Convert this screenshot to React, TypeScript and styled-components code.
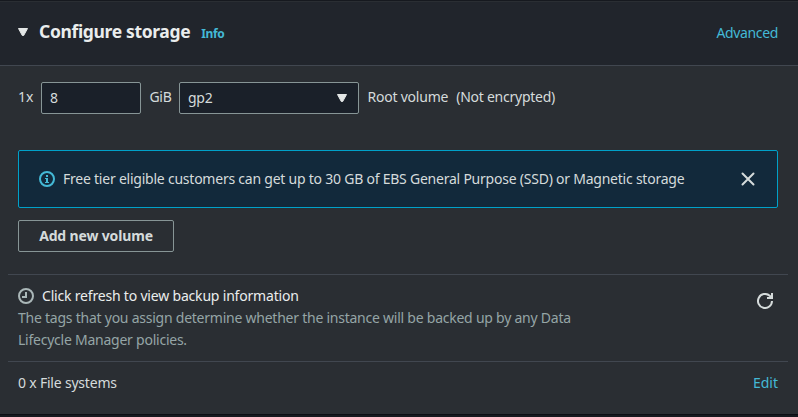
import React from "react";
import styled, { createGlobalStyle } from "styled-components";

const GlobalStyle = createGlobalStyle`
  * { box-sizing: border-box; }
  body {
    margin: 0;
    background: #16191f;
    overflow: hidden;
    font-family: "Noto Sans", "Open Sans", sans-serif;
    font-size: 14px;
    line-height: 22px;
    color: #d5dbdb;
  }
`;

const Panel = styled.section`
  display: flex;
  flex-direction: column;
  height: 415px;
  border-top: 1px solid #16191f;
  border-bottom: 1px solid #0c0e13;
  background: #2a2e33;
`;

const Header = styled.header`
  display: flex;
  align-items: center;
  flex: none;
  height: 65px;
  padding: 0 20px 2px 18px;
  border-top: 1px solid #2a2e33;
  border-bottom: 1px solid #414750;
  background: #21252c;

  & > svg {
    margin-bottom: 2px;
  }
`;

const Title = styled.h2`
  margin: 0 11px 3px 11px;
  font-size: 17.5px;
  font-weight: 700;
  line-height: 22px;
  letter-spacing: -0.35px;
  color: #eaeded;
  white-space: nowrap;
`;

const Label = styled.span<{ $spacing?: number }>`
  letter-spacing: ${({ $spacing = -0.23 }) => $spacing}px;
  white-space: pre;
`;

const Link = styled.a<{ $small?: boolean; $spacing?: number }>`
  margin-top: ${({ $small }) => ($small ? 2 : 0)}px;
  color: #44b9d6;
  font-size: ${({ $small }) => ($small ? 12 : 14)}px;
  font-weight: ${({ $small }) => ($small ? 700 : 400)};
  letter-spacing: ${({ $spacing = 0 }) => $spacing}px;
  cursor: pointer;
`;

const Spacer = styled.div`
  flex: 1;
`;

const VolumeRow = styled.div`
  display: flex;
  align-items: center;
  gap: 8px;
  height: 32px;
  margin: 16px 18px 36px;

  & > span {
    padding-bottom: 2px;
  }
`;

const Field = styled.div<{ $width: number }>`
  display: flex;
  align-items: center;
  justify-content: space-between;
  width: ${({ $width }) => $width}px;
  height: 32px;
  padding: 0 11px 0 7.5px;
  border: 1px solid #879596;
  border-radius: 2px;
  background: #1a2029;
`;

const Alert = styled.div`
  display: flex;
  align-items: center;
  flex: none;
  height: 58px;
  margin: 0 20px 12px 18px;
  padding: 0 22px 0 20px;
  border: 1px solid #00a1c9;
  border-radius: 2px;
  background: #12293b;
`;

const AlertText = styled(Label)`
  flex: 1;
  margin-left: 8px;
`;

const Button = styled.button`
  width: 156px;
  height: 32px;
  margin: 0 0 22px 18px;
  padding: 0;
  border: 1px solid #879596;
  border-radius: 2px;
  background: transparent;
  color: #d5dbdb;
  font: 700 14px/22px "Noto Sans", sans-serif;
  letter-spacing: -0.15px;
`;

const Section = styled.div<{ $height: number }>`
  display: flex;
  flex: none;
  height: ${({ $height }) => $height}px;
  margin: 0 10px 0 8px;
  padding: 10px;
  border-top: 1px solid #414750;
`;

const Heading = styled.div`
  display: flex;
  align-items: center;
  gap: 8px;
  color: #eaeded;
`;

const Description = styled.div`
  display: flex;
  flex-direction: column;
  color: #95a5a6;
`;

const RefreshSlot = styled.div`
  height: 16px;
  margin: 8px 5px 0 0;
`;

const Icon = styled.svg`
  display: block;
  flex: none;
`;

const Caret = () => (
  <Icon width="10" height="8" viewBox="0 0 10 8">
    <path d="M.5.5h9L5.7 7.5H4.3z" fill="#e4e7e7" stroke="#e4e7e7" strokeLinejoin="round" />
  </Icon>
);

const InfoIcon = () => (
  <Icon width="16" height="16" viewBox="0 0 16 16" fill="none" stroke="#44b9d6" strokeWidth="2">
    <circle cx="8" cy="8" r="7" />
    <path d="M7 4h2v2H7zM6 7h3v4h1v1H6v-1h1V8H6z" fill="#44b9d6" stroke="none" />
  </Icon>
);

const CloseIcon = () => (
  <Icon width="14" height="14" viewBox="0 0 14 14" fill="none" stroke="#d5dbdb" strokeWidth="2" strokeLinecap="round">
    <path d="m1.5 1.5 11 11m0-11-11 11" />
  </Icon>
);

const ClockIcon = () => (
  <Icon width="16" height="16" viewBox="0 0 16 16" fill="none" stroke="#aab7b8" strokeWidth="2">
    <circle cx="8" cy="8" r="7" />
    <path d="M8 4v5H4" />
  </Icon>
);

const RefreshIcon = () => (
  <Icon width="16" height="16" viewBox="0 0 16 16" fill="none" stroke="#d5dbdb" strokeWidth="2">
    <path d="M15 8a7 7 0 1 1-2.3-5.2L15 5" />
    <path d="M15 0v5h-5" />
  </Icon>
);

export default function App() {
  return (
    <>
      <GlobalStyle />
      <Panel>
        <Header>
          <Caret />
          <Title>Configure storage</Title>
          <Link $small $spacing={-0.4}>Info</Link>
          <Spacer />
          <Link $spacing={-0.35}>Advanced</Link>
        </Header>
        <VolumeRow>
          <Label $spacing={0}>1x</Label>
          <Field $width={100}><Label>8</Label><Spacer /></Field>
          <Label $spacing={-0.3}>GiB</Label>
          <Field $width={180}><Label>gp2</Label><Caret /></Field>
          <Label $spacing={-0.22}>Root volume</Label>
          <Label $spacing={-0.25}>(Not encrypted)</Label>
        </VolumeRow>
        <Alert>
          <InfoIcon />
          <AlertText>Free tier eligible customers can get up to 30 GB of EBS General Purpose (SSD) or Magnetic storage</AlertText>
          <CloseIcon />
        </Alert>
        <Button>Add new volume</Button>
        <Section $height={87}>
          <div>
            <Heading><ClockIcon /><Label $spacing={-0.19}>Click refresh to view backup information</Label></Heading>
            <Description>
              <Label $spacing={-0.24}>The tags that you assign determine whether the instance will be backed up by any Data</Label>
              <Label $spacing={-0.24}>Lifecycle Manager policies.</Label>
            </Description>
          </div>
          <Spacer />
          <RefreshSlot><RefreshIcon /></RefreshSlot>
        </Section>
        <Section $height={53}>
          <Label $spacing={-0.2}>0 x File systems</Label>
          <Spacer />
          <Link>Edit</Link>
        </Section>
      </Panel>
    </>
  );
}
